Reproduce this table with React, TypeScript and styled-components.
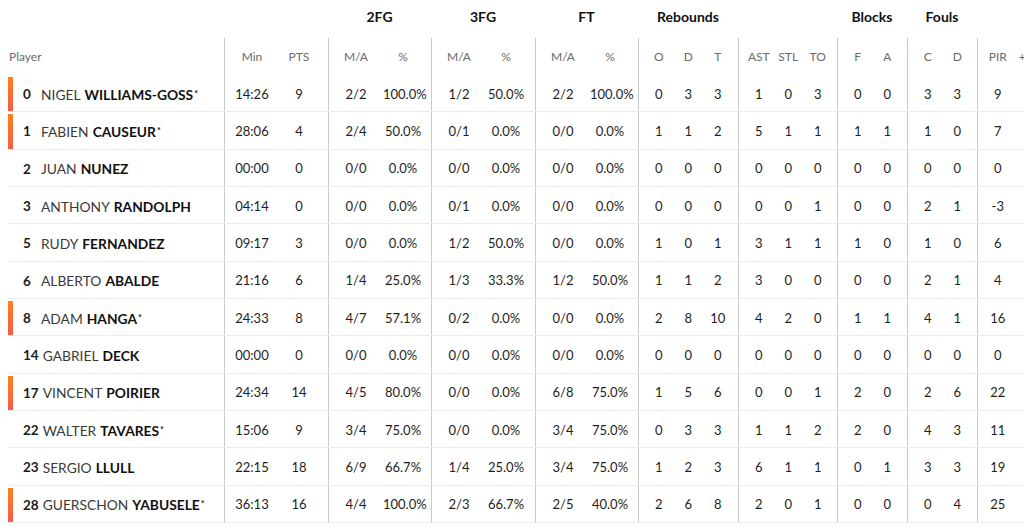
import React from "react";
import styled, { createGlobalStyle } from "styled-components";

const GlobalStyle = createGlobalStyle`
  html, body { margin: 0; padding: 0; background: #fff; overflow: hidden; }
  body { font-family: Lato, "Open Sans", Arial, sans-serif; color: #222; }
`;

type Player = {
  no: string;
  first: string;
  last: string;
  star?: boolean;
  starter?: boolean;
  min: string;
  pts: string;
  fg2: [string, string];
  fg3: [string, string];
  ft: [string, string];
  reb: [string, string, string];
  ast: [string, string, string];
  blk: [string, string];
  fouls: [string, string];
  pir: string;
};

const players: Player[] = [
  { no: "0", first: "NIGEL", last: "WILLIAMS-GOSS", star: true, starter: true, min: "14:26", pts: "9", fg2: ["2/2", "100.0%"], fg3: ["1/2", "50.0%"], ft: ["2/2", "100.0%"], reb: ["0", "3", "3"], ast: ["1", "0", "3"], blk: ["0", "0"], fouls: ["3", "3"], pir: "9" },
  { no: "1", first: "FABIEN", last: "CAUSEUR", star: true, starter: true, min: "28:06", pts: "4", fg2: ["2/4", "50.0%"], fg3: ["0/1", "0.0%"], ft: ["0/0", "0.0%"], reb: ["1", "1", "2"], ast: ["5", "1", "1"], blk: ["1", "1"], fouls: ["1", "0"], pir: "7" },
  { no: "2", first: "JUAN", last: "NUNEZ", min: "00:00", pts: "0", fg2: ["0/0", "0.0%"], fg3: ["0/0", "0.0%"], ft: ["0/0", "0.0%"], reb: ["0", "0", "0"], ast: ["0", "0", "0"], blk: ["0", "0"], fouls: ["0", "0"], pir: "0" },
  { no: "3", first: "ANTHONY", last: "RANDOLPH", min: "04:14", pts: "0", fg2: ["0/0", "0.0%"], fg3: ["0/1", "0.0%"], ft: ["0/0", "0.0%"], reb: ["0", "0", "0"], ast: ["0", "0", "1"], blk: ["0", "0"], fouls: ["2", "1"], pir: "-3" },
  { no: "5", first: "RUDY", last: "FERNANDEZ", min: "09:17", pts: "3", fg2: ["0/0", "0.0%"], fg3: ["1/2", "50.0%"], ft: ["0/0", "0.0%"], reb: ["1", "0", "1"], ast: ["3", "1", "1"], blk: ["1", "0"], fouls: ["1", "0"], pir: "6" },
  { no: "6", first: "ALBERTO", last: "ABALDE", min: "21:16", pts: "6", fg2: ["1/4", "25.0%"], fg3: ["1/3", "33.3%"], ft: ["1/2", "50.0%"], reb: ["1", "1", "2"], ast: ["3", "0", "0"], blk: ["0", "0"], fouls: ["2", "1"], pir: "4" },
  { no: "8", first: "ADAM", last: "HANGA", star: true, starter: true, min: "24:33", pts: "8", fg2: ["4/7", "57.1%"], fg3: ["0/2", "0.0%"], ft: ["0/0", "0.0%"], reb: ["2", "8", "10"], ast: ["4", "2", "0"], blk: ["1", "1"], fouls: ["4", "1"], pir: "16" },
  { no: "14", first: "GABRIEL", last: "DECK", min: "00:00", pts: "0", fg2: ["0/0", "0.0%"], fg3: ["0/0", "0.0%"], ft: ["0/0", "0.0%"], reb: ["0", "0", "0"], ast: ["0", "0", "0"], blk: ["0", "0"], fouls: ["0", "0"], pir: "0" },
  { no: "17", first: "VINCENT", last: "POIRIER", starter: true, min: "24:34", pts: "14", fg2: ["4/5", "80.0%"], fg3: ["0/0", "0.0%"], ft: ["6/8", "75.0%"], reb: ["1", "5", "6"], ast: ["0", "0", "1"], blk: ["2", "0"], fouls: ["2", "6"], pir: "22" },
  { no: "22", first: "WALTER", last: "TAVARES", star: true, min: "15:06", pts: "9", fg2: ["3/4", "75.0%"], fg3: ["0/0", "0.0%"], ft: ["3/4", "75.0%"], reb: ["0", "3", "3"], ast: ["1", "1", "2"], blk: ["2", "0"], fouls: ["4", "3"], pir: "11" },
  { no: "23", first: "SERGIO", last: "LLULL", min: "22:15", pts: "18", fg2: ["6/9", "66.7%"], fg3: ["1/4", "25.0%"], ft: ["3/4", "75.0%"], reb: ["1", "2", "3"], ast: ["6", "1", "1"], blk: ["0", "1"], fouls: ["3", "3"], pir: "19" },
  { no: "28", first: "GUERSCHON", last: "YABUSELE", star: true, starter: true, min: "36:13", pts: "16", fg2: ["4/4", "100.0%"], fg3: ["2/3", "66.7%"], ft: ["2/5", "40.0%"], reb: ["2", "6", "8"], ast: ["2", "0", "1"], blk: ["0", "0"], fouls: ["0", "4"], pir: "25" },
];

const Table = styled.div`
  padding-left: 8px;
  width: 1100px;
`;

const Row = styled.div<{ $h: number; $sep?: boolean }>`
  display: flex;
  height: ${(p) => p.$h}px;
  box-sizing: border-box;
  ${(p) => (p.$sep ? "border-bottom: 1px solid #ececec;" : "")}
`;

const PlayerCell = styled.div`
  position: relative;
  width: 216px;
  flex: none;
  display: flex;
  align-items: center;
  padding-left: 15px;
  padding-top: 2px;
  box-sizing: border-box;
  font-size: 13.8px;
  white-space: nowrap;
`;

const PlayerHead = styled.div`
  width: 216px;
  flex: none;
  display: flex;
  align-items: center;
  padding-left: 1px;
  padding-top: 1px;
  box-sizing: border-box;
  font-size: 12px;
  color: #6b6b6b;
`;

const StarterBar = styled.span`
  position: absolute;
  left: 0;
  top: 2px;
  bottom: 0;
  width: 5px;
  background: linear-gradient(180deg, #ff801c 0%, #f55c4c 100%);
`;

const Num = styled.span`
  min-width: 14px;
  margin-right: 4px;
  flex: none;
  font-size: 13.5px;
  font-weight: 700;
  color: #1c1c1c;
`;

const First = styled.span`
  color: #3a3a3a;
  margin-right: 4px;
`;

const Last = styled.span`
  font-weight: 700;
  color: #111;
`;

const Star = styled.sup`
  font-size: 9px;
  font-weight: 700;
  margin-left: 1px;
  position: relative;
  top: -1px;
`;

const Group = styled.div<{ $w: number; $line?: boolean; $pad?: number }>`
  width: ${(p) => p.$w}px;
  flex: none;
  display: flex;
  align-items: center;
  box-sizing: border-box;
  padding-left: ${(p) => p.$pad ?? 0}px;
  padding-top: 1px;
  border-left: ${(p) => (p.$line ? "1px solid #c9c9c9" : "1px solid transparent")};
`;

const Cell = styled.div<{ $w: number; $head?: boolean }>`
  width: ${(p) => p.$w}px;
  flex: none;
  text-align: center;
  font-size: ${(p) => (p.$head ? "12px" : "13px")};
  color: ${(p) => (p.$head ? "#6b6b6b" : "#1e1e1e")};
  white-space: nowrap;
`;

const GroupTitle = styled.div<{ $w: number }>`
  width: ${(p) => p.$w}px;
  flex: none;
  text-align: center;
  font-size: 14px;
  font-weight: 700;
  color: #111;
  padding-bottom: 4px;
  box-sizing: border-box;
  align-self: center;
`;

const W = {
  two: [104, 103, 104, 103],
  reb: 100,
  ast: 99,
  blk: 70,
  fouls: 70,
  pir: 100,
};

const TwoCols = ({ w, a, b, head }: { w: number; a: string; b: string; head?: boolean }) => (
  <Group $w={w} $line>
    <Cell $w={54} $head={head}>{a}</Cell>
    <Cell $w={40} $head={head}>{b}</Cell>
  </Group>
);

const ThreeCols = ({ w, vals, head }: { w: number; vals: string[]; head?: boolean }) => (
  <Group $w={w} $line $pad={5}>
    {vals.map((v, i) => (
      <Cell key={i} $w={29.5} $head={head}>{v}</Cell>
    ))}
  </Group>
);

export default function App() {
  return (
    <>
      <GlobalStyle />
      <Table>
        <Row $h={37.67}>
          <GroupTitle $w={216} />
          <GroupTitle $w={W.two[0]} />
          <GroupTitle $w={W.two[1]}>2FG</GroupTitle>
          <GroupTitle $w={W.two[2]}>3FG</GroupTitle>
          <GroupTitle $w={W.two[3]}>FT</GroupTitle>
          <GroupTitle $w={W.reb}>Rebounds</GroupTitle>
          <GroupTitle $w={W.ast} />
          <GroupTitle $w={W.blk}>Blocks</GroupTitle>
          <GroupTitle $w={W.fouls}>Fouls</GroupTitle>
        </Row>
        <Row $h={37.33}>
          <PlayerHead>Player</PlayerHead>
          <TwoCols w={W.two[0]} a="Min" b="PTS" head />
          <TwoCols w={W.two[1]} a="M/A" b="%" head />
          <TwoCols w={W.two[2]} a="M/A" b="%" head />
          <TwoCols w={W.two[3]} a="M/A" b="%" head />
          <ThreeCols w={W.reb} vals={["O", "D", "T"]} head />
          <ThreeCols w={W.ast} vals={["AST", "STL", "TO"]} head />
          <ThreeCols w={W.blk} vals={["F", "A"]} head />
          <ThreeCols w={W.fouls} vals={["C", "D"]} head />
          <ThreeCols w={W.pir} vals={["PIR", "+/-"]} head />
        </Row>
        {players.map((p) => (
          <Row key={p.no} $h={37.33} $sep>
            <PlayerCell>
              {p.starter && <StarterBar />}
              <Num>{p.no}</Num>
              <First>{p.first}</First>
              <Last>{p.last}</Last>
              {p.star && <Star>*</Star>}
            </PlayerCell>
            <TwoCols w={W.two[0]} a={p.min} b={p.pts} />
            <TwoCols w={W.two[1]} a={p.fg2[0]} b={p.fg2[1]} />
            <TwoCols w={W.two[2]} a={p.fg3[0]} b={p.fg3[1]} />
            <TwoCols w={W.two[3]} a={p.ft[0]} b={p.ft[1]} />
            <ThreeCols w={W.reb} vals={p.reb} />
            <ThreeCols w={W.ast} vals={p.ast} />
            <ThreeCols w={W.blk} vals={p.blk} />
            <ThreeCols w={W.fouls} vals={p.fouls} />
            <ThreeCols w={W.pir} vals={[p.pir, ""]} />
          </Row>
        ))}
      </Table>
    </>
  );
}
